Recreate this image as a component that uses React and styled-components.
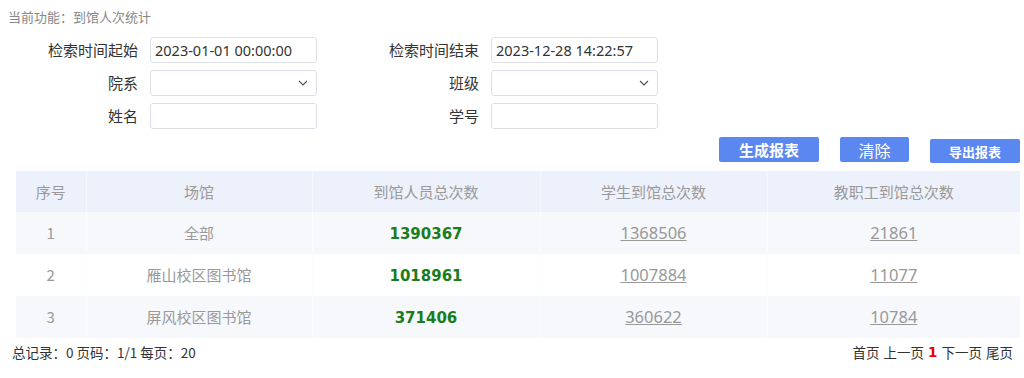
import React from "react";
import styled, { createGlobalStyle } from "styled-components";

const GlobalStyle = createGlobalStyle`
  body {
    margin: 0;
    background: #fff;
    font-family: "Noto Sans CJK SC", "Noto Sans", sans-serif;
    color: #333;
  }
`;

const Page = styled.div`
  width: 1024px;
  padding: 7px 4px 0 8px;
  box-sizing: border-box;
`;

const Crumb = styled.div`
  font-size: 13px;
  line-height: 20px;
  color: #888;
`;

const FormGrid = styled.div`
  display: grid;
  grid-template-columns: 142px 167px 174px 167px;
  grid-auto-rows: 26px;
  row-gap: 7px;
  margin-top: 10px;
`;

const Label = styled.label`
  font-size: 15px;
  line-height: 26px;
  color: #333;
  text-align: right;
  padding-right: 12px;
`;

const Field = styled.div`
  box-sizing: border-box;
  height: 26px;
  border: 1px solid #dcdfe6;
  border-radius: 3px;
  padding: 0 8px 0 4px;
  display: flex;
  align-items: center;
  justify-content: space-between;
  font-family: "Noto Sans", sans-serif;
  font-size: 14.5px;
  color: #333;
  background: #fff;
`;

const Chevron = () => (
  <svg width="10" height="6" viewBox="0 0 10 6">
    <path d="M1 1l4 4 4-4" fill="none" stroke="#555" strokeWidth="1.2" />
  </svg>
);

const Actions = styled.div`
  display: flex;
  justify-content: flex-end;
  align-items: flex-start;
  gap: 21px;
  margin-top: 8px;
  height: 34px;
`;

const Button = styled.button`
  border: none;
  border-radius: 2px;
  background: #5b87f0;
  color: #fff;
  height: ${(p) => (p.small ? "24px" : "25px")};
  width: ${(p) => p.w}px;
  margin-top: ${(p) => (p.small ? "2px" : "0")};
  font-family: "Noto Sans CJK SC", sans-serif;
  font-size: ${(p) => (p.bold ? (p.small ? "13px" : "15px") : "16px")};
  font-weight: ${(p) => (p.bold ? 700 : 400)};
  padding: 0;
  line-height: 1;
`;

const Table = styled.table`
  margin-left: 8px;
  width: 1004px;
  border-collapse: collapse;
  table-layout: fixed;
`;

const Th = styled.th`
  height: 41px;
  padding: 0;
  background: #edf1fb;
  font-weight: 400;
  font-size: 15px;
  line-height: 20px;
  color: #999;
  border-left: 1px solid #f6f8fd;
  &:first-child {
    border-left: none;
  }
`;

const Row = styled.tr`
  background: ${(p) => (p.striped ? "#f6f8fc" : "#fff")};
`;

const Td = styled.td`
  height: 42px;
  padding: 0;
  text-align: center;
  font-size: 15px;
  line-height: 20px;
  color: #999;
  border-left: 1px solid #fbfcfe;
  &:first-child {
    border-left: none;
  }
`;

const Total = styled.span`
  font-family: "DejaVu Sans", sans-serif;
  font-weight: 700;
  font-size: 15px;
  color: #1a7d1a;
`;

const Link = styled.a`
  font-family: "Noto Sans", sans-serif;
  color: #999;
  text-decoration: underline;
  font-size: 16.5px;
`;

const Footer = styled.div`
  display: flex;
  justify-content: space-between;
  padding: 4px 7px 0 4px;
  font-size: 13.5px;
  line-height: 20px;
  color: #333;
`;

const Pager = styled.div`
  display: flex;
  gap: 4px;
  b {
    color: #e00;
    font-family: "DejaVu Sans", sans-serif;
  }
`;

const rows = [
  { n: 1, name: "全部", total: "1390367", stu: "1368506", staff: "21861" },
  { n: 2, name: "雁山校区图书馆", total: "1018961", stu: "1007884", staff: "11077" },
  { n: 3, name: "屏风校区图书馆", total: "371406", stu: "360622", staff: "10784" },
];

export default function App() {
  return (
    <Page>
      <GlobalStyle />
      <Crumb>当前功能：到馆人次统计</Crumb>
      <FormGrid>
        <Label>检索时间起始</Label>
        <Field>2023-01-01 00:00:00</Field>
        <Label>检索时间结束</Label>
        <Field>2023-12-28 14:22:57</Field>
        <Label>院系</Label>
        <Field>
          <span />
          <Chevron />
        </Field>
        <Label>班级</Label>
        <Field>
          <span />
          <Chevron />
        </Field>
        <Label>姓名</Label>
        <Field />
        <Label>学号</Label>
        <Field />
      </FormGrid>
      <Actions>
        <Button bold w={100}>生成报表</Button>
        <Button w={69}>清除</Button>
        <Button bold small w={90}>导出报表</Button>
      </Actions>
      <Table>
        <colgroup>
          <col style={{ width: 70 }} />
          <col style={{ width: 226 }} />
          <col style={{ width: 228 }} />
          <col style={{ width: 227 }} />
          <col />
        </colgroup>
        <thead>
          <tr>
            <Th>序号</Th>
            <Th>场馆</Th>
            <Th>到馆人员总次数</Th>
            <Th>学生到馆总次数</Th>
            <Th>教职工到馆总次数</Th>
          </tr>
        </thead>
        <tbody>
          {rows.map((r) => (
            <Row key={r.n} striped={r.n % 2 === 1}>
              <Td>{r.n}</Td>
              <Td>{r.name}</Td>
              <Td>
                <Total>{r.total}</Total>
              </Td>
              <Td>
                <Link>{r.stu}</Link>
              </Td>
              <Td>
                <Link>{r.staff}</Link>
              </Td>
            </Row>
          ))}
        </tbody>
      </Table>
      <Footer>
        <span>总记录：0 页码：1/1 每页：20</span>
        <Pager>
          <span>首页</span>
          <span>上一页</span>
          <b>1</b>
          <span>下一页</span>
          <span>尾页</span>
        </Pager>
      </Footer>
    </Page>
  );
}
